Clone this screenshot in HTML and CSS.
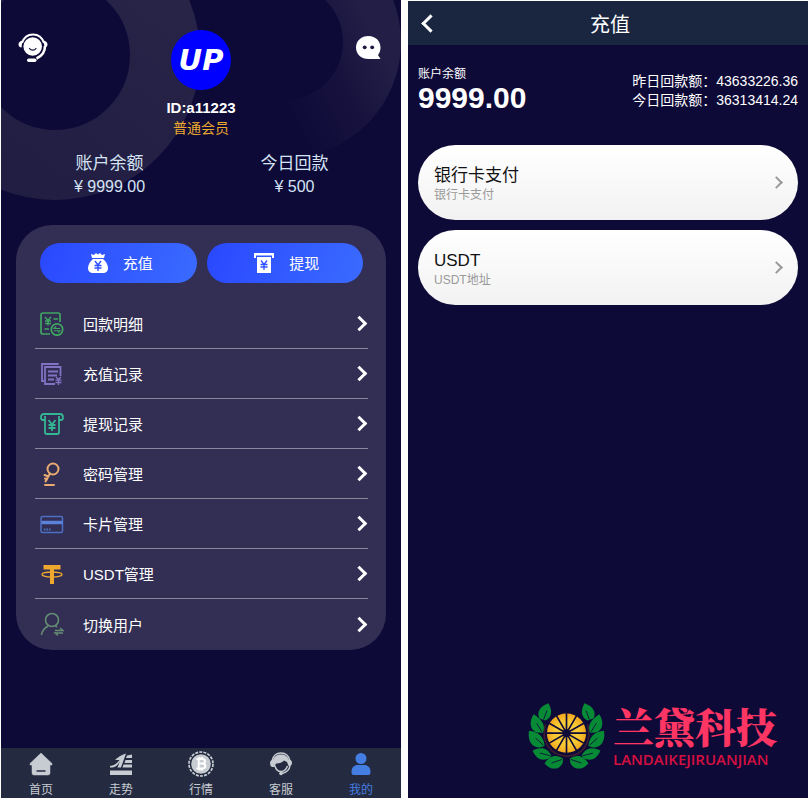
FILE: index.html
```html
<!DOCTYPE html>
<html lang="zh-CN">
<head>
<meta charset="utf-8">
<meta name="viewport" content="width=device-width, initial-scale=1">
<title>我的 · 充值</title>
<link rel="stylesheet" href="styles.css">
</head>
<body>
<main class="screens">
  <section class="screen profile" aria-label="我的">
    <svg class="rings" viewBox="0 0 400 210" width="400" height="210" aria-hidden="true">
      <defs>
        <linearGradient id="ringLeft" x1="1" y1="0" x2="0.2" y2="1"><stop offset="0" stop-color="#292548"/><stop offset="1" stop-color="#211d43"/></linearGradient>
        <linearGradient id="ringRight" gradientUnits="userSpaceOnUse" x1="385" y1="60" x2="285" y2="110"><stop offset="0" stop-color="#231e46"/><stop offset="0.45" stop-color="#17123d"/><stop offset="1" stop-color="#0e0a38"/></linearGradient>
      </defs>
      <circle cx="284" cy="42" r="87" fill="none" stroke="url(#ringRight)" stroke-width="58"/>
      <circle cx="54" cy="55" r="110" fill="none" stroke="url(#ringLeft)" stroke-width="70"/>
    </svg>

    <header class="user">
      <button class="icon-button" type="button" aria-label="客服">
        <svg viewBox="0 0 30 30" width="30" height="30" fill="none" stroke="#fff">
          <path d="M4 10C6 4 10 1.500 15 1.500S24 4 26 10" stroke-width="2"/>
          <path d="M4.500 7.500C2 8 .5 9.500.5 11.500s1.500 3 3 3zM25.500 7.500C28 8 29.500 9.500 29.500 11.500s-1.500 3-3 3z" fill="#fff" stroke="none"/>
          <circle cx="14.700" cy="13.500" r="9.300" fill="#fff" stroke="none"/>
          <path d="M11.500 15.500c1.500 2.200 5 2.200 6.500 0" stroke="#171340" stroke-width="1.300" stroke-linecap="round"/>
          <path d="M27 13c0 5-3 10-8.500 12.500" stroke-width="2.600"/>
          <rect x="9" y="25.500" width="9.500" height="3.500" rx="1.700" fill="#fff" stroke="none"/>
        </svg>
      </button>
      <div class="identity">
        <div class="avatar">UP</div>
        <strong class="user-id">ID:a11223</strong>
        <span class="level">普通会员</span>
      </div>
      <button class="icon-button" type="button" aria-label="消息">
        <svg viewBox="0 0 30 30" width="30" height="30">
          <path d="M14.500 3C21.500 3 26.500 8 26.500 14.500c0 3-1 5.500-2.500 7.500l2.500 4H14.500C7.500 26 2 21.500 2 14.500S7.500 3 14.500 3z" fill="#fff"/>
          <circle cx="10.700" cy="14.300" r="1.900" fill="#1c183f"/><circle cx="18.200" cy="14.300" r="1.900" fill="#1c183f"/>
        </svg>
      </button>
    </header>

    <dl class="totals">
      <div><dt>账户余额</dt><dd>¥ 9999.00</dd></div>
      <div><dt>今日回款</dt><dd>¥ 500</dd></div>
    </dl>

    <div class="card">
      <div class="actions">
        <button class="action" type="button">
          <svg viewBox="0 0 22 22" width="22" height="22">
            <path d="M5 6L4 2l3 1 2-2 2 1.500L13 1l2 2 3-1-1 4z" fill="#fff"/>
            <path d="M6 7h10c3 2.500 5 6 5 9 0 3.500-2 5-5 5H6c-3 0-5-1.500-5-5 0-3 2-6.500 5-9z" fill="#fff"/>
            <path d="M8 9l3 4 3-4M11 13v6M7.500 13.500h7M7.500 16h7" stroke="#2f50ff" stroke-width="1.400" fill="none"/>
          </svg>
          <span>充值</span>
        </button>
        <button class="action" type="button">
          <svg viewBox="0 0 22 22" width="22" height="22">
            <path d="M1 1h20v5h-2V3.500H3V6H1z" fill="#fff"/>
            <path d="M4 5h14v16H4z" fill="#fff"/>
            <path d="M8 8.500l3 4 3-4M11 12.500v5.500M7.500 12.500h7M7.500 15h7" stroke="#2f50ff" stroke-width="1.300" fill="none"/>
          </svg>
          <span>提现</span>
        </button>
      </div>
      <nav class="menu" aria-label="账户菜单">
        <a href="#returns">
          <svg viewBox="0 0 24 24" width="24" height="24" fill="none" stroke="#40a662" stroke-width="1.700">
            <path d="M20 10V3q0-2-2-2H3Q1 1 1 3v17q0 2 2 2h7"/><path d="M5 5l3 3.500L11 5M8 8.500v5M5 9h6M5 11.500h6M13.500 7H18M4.500 17H9" stroke-width="1.400"/>
            <circle cx="17" cy="17.500" r="5.700"/><path d="M20 16.500h-6l2-2M14 18.700h6l-2 2" stroke-width="1.100"/>
          </svg>
          <span>回款明细</span><i class="chevron"></i>
        </a>
        <a href="#recharges">
          <svg viewBox="0 0 24 24" width="24" height="24" fill="none" stroke="#8272c4" stroke-width="1.800">
            <path d="M18 2.500V2H2v17h2"/><path d="M20.500 14V5H5v17h10"/><path d="M8 9.500h10M8 13.500h9M8 17.500h6"/><path d="M16 15l2.500 2.500L21 15M18.500 17.500V23M15.500 18.200h6M15.500 20.500h6" stroke-width="1.300"/>
          </svg>
          <span>充值记录</span><i class="chevron"></i>
        </a>
        <a href="#withdrawals">
          <svg viewBox="0 0 24 24" width="24" height="24" fill="none" stroke="#35b693" stroke-width="1.800">
            <path d="M5 8H3Q1 8 1 5.500 1 2 4 2h16q3 0 3 3.500Q23 8 21 8h-2"/><path d="M5 4v16q0 2 2 2h10q2 0 2-2V4"/><path d="M8.500 8l3.500 4.500L15.500 8M12 12.500V19M8.500 13h7M8.500 16h7"/>
          </svg>
          <span>提现记录</span><i class="chevron"></i>
        </a>
        <a href="#password">
          <svg viewBox="0 0 24 24" width="24" height="24" fill="none" stroke="#e8ab70" stroke-width="2" stroke-linecap="round" stroke-linejoin="round">
            <circle cx="13" cy="7" r="5.500"/><path d="M10 11.500L5.500 19.500M8.500 14.500l-4-1.500M7 17.500l-2-1M5 23h9"/>
          </svg>
          <span>密码管理</span><i class="chevron"></i>
        </a>
        <a href="#cards">
          <svg viewBox="0 0 24 24" width="24" height="24" fill="none" stroke="#4c70c2" stroke-width="1.500">
            <rect x="1" y="4.500" width="21.500" height="16" rx="1.500"/><path d="M1.500 10.500h21" stroke="#5b82da" stroke-width="3.500"/><path d="M4 17.500h1.500M6.500 17.500H8M9 17.500h1.500" stroke-width="2"/>
          </svg>
          <span>卡片管理</span><i class="chevron"></i>
        </a>
        <a href="#usdt">
          <svg viewBox="0 0 24 24" width="24" height="24" fill="none" stroke="#efa82e">
            <path d="M3.500 3h17v4.500H14V22h-4V7.500H3.500z" fill="#efa82e" stroke="none"/><ellipse cx="12" cy="12.500" rx="10" ry="2.500" stroke-width="1.300"/>
          </svg>
          <span>USDT管理</span><i class="chevron"></i>
        </a>
        <a href="#switch">
          <svg viewBox="0 0 24 24" width="24" height="24" fill="none" stroke="#668e73" stroke-width="1.600">
            <circle cx="12" cy="8" r="6.500"/><path d="M1.500 23c.5-4.500 3-7 6.500-9M15.500 14.200l1.500 1"/><path d="M15 18.500h8l-3-2.500M23 21h-8l3 2.500" stroke-width="1.300"/>
          </svg>
          <span>切换用户</span><i class="chevron"></i>
        </a>
      </nav>
    </div>

    <nav class="tabs" aria-label="主导航">
      <a href="#home">
        <svg viewBox="0 0 26 26" width="26" height="26"><path d="M13 2l11 10.500V14h-2v8q0 2-2 2H6q-2 0-2-2v-8H2v-1.500z" fill="#c7ccd2" stroke="#c7ccd2" stroke-width=".5"/><path d="M8.500 20h9" stroke="#242a3f" stroke-width="1.500"/></svg>
        <span>首页</span>
      </a>
      <a href="#trend">
        <svg viewBox="0 0 26 26" width="26" height="26" fill="#c7ccd2"><path d="M2 19.500h22V24H2z"/><path d="M2 16.500V15c4-.5 7-2.500 9.500-6L7 9C10 6 13 4 18 2.500L13 16.500H9.500L12 10c-2 4-4.500 6.500-7.500 6.500zM19 4.500l5-1V7h-6zM17.500 9H24v3h-7.500zM15.500 13.500H24v3h-9.500z"/></svg>
        <span>走势</span>
      </a>
      <a href="#market">
        <svg viewBox="0 0 26 26" width="26" height="26" fill="none"><circle cx="13" cy="13" r="12" stroke="#c7ccd2" stroke-width="1.700" stroke-dasharray="3 1.189"/><circle cx="13" cy="13" r="9.800" fill="#c7ccd2"/><path d="M8.500 8H14c4 0 4 4.500 0 4.500h-3.500M14 12.500c4.500 0 4.500 5 0 5H8.500M10.700 8v9.500M11.500 6v2M14 6v2M11.500 17.500v2M14 17.500v2" stroke="#fff" stroke-width="1.900"/></svg>
        <span>行情</span>
      </a>
      <a href="#service">
        <svg viewBox="0 0 26 26" width="26" height="26" fill="none" stroke="#c7ccd2"><path d="M4 10C5 5 8.500 2 13 2s8 3 9 8" stroke-width="1.300"/><path d="M5 9C6 5.500 9 3.500 13 3.500S20 5.500 21 9h1.500q1.500.5 1.500 3t-2 3h-1.500l-1.500-4-3-1.500c-3 3-6 3-8 3L6.500 16H4Q2 15 2 12t3-3z" fill="#c7ccd2" stroke="none"/><path d="M7 15c1 4 3 5.500 6 5.500s5-1.500 6.500-5.500M22 14.500c-.5 4-3.500 7-8 8" stroke-width="1.500"/><circle cx="13" cy="22.500" r="1.800" fill="#c7ccd2" stroke="none"/></svg>
        <span>客服</span>
      </a>
      <a href="#me" class="current" aria-current="page">
        <svg viewBox="0 0 26 26" width="26" height="26" fill="#457ee3"><circle cx="13" cy="7.500" r="5.500"/><path d="M3.500 21c0-5 3-7 6-7h7c3 0 6 2 6 7q0 3-2 3h-15q-2 0-2-3z"/></svg>
        <span>我的</span>
      </a>
    </nav>
  </section>

  <section class="screen recharge" aria-label="充值">
    <header class="title-bar">
      <button class="back" type="button" aria-label="返回"><i class="chevron back-mark"></i></button>
      <h1>充值</h1>
    </header>
    <div class="summary">
      <div class="balance"><span>账户余额</span><strong>9999.00</strong></div>
      <div class="returns"><span>昨日回款额：43633226.36</span><span>今日回款额：36313414.24</span></div>
    </div>
    <div class="methods">
      <button class="method" type="button">
        <span class="method-text"><span class="method-name">银行卡支付</span><span class="method-note">银行卡支付</span></span>
        <i class="chevron small"></i>
      </button>
      <button class="method" type="button">
        <span class="method-text"><span class="method-name">USDT</span><span class="method-note">USDT地址</span></span>
        <i class="chevron small"></i>
      </button>
    </div>
    <footer class="brand">
      <svg viewBox="50 35 232 203" width="77" height="68" aria-hidden="true">
        <defs>
          <radialGradient id="fruit"><stop offset="0" stop-color="#f5c33a"/><stop offset="0.6" stop-color="#f8cb35"/><stop offset="1" stop-color="#f3a71d"/></radialGradient>
          <g id="laurel">
            <g fill="#078a35">
              <path d="M112 38C88 46 74 64 85 84L103 90C124 78 123 60 112 38z"/>
              <path d="M67 71C52 96 56 119 78 126L95 127C104 105 92 86 67 71z"/>
              <path d="M53 121C48 150 62 172 86 171L100 167C98 141 84 124 53 121z"/>
              <path d="M64 180C74 206 94 214 115 203L120 195C108 172 90 168 64 180z"/>
              <path d="M100 219C118 240 142 240 154 219L156 205C135 190 114 196 100 219z"/>
            </g>
            <path d="M97 87L107 60M92 124L76 98M96 164L73 143M117 196L86 188M153 207L121 218" stroke="#0e0a38" stroke-width="2.500" fill="none"/>
          </g>
        </defs>
        <path d="M103 102C88 150 115 195 166 197S244 150 229 102" fill="none" stroke="#3d1c31" stroke-width="5"/>
        <use href="#laurel"/><use href="#laurel" transform="translate(332 0) scale(-1 1)"/>
        <circle cx="166" cy="128" r="59" fill="url(#fruit)"/>
        <path d="M106 128h120M166 68v120M114 98l104 60M114 158l104-60M136 76l60 104M196 76l-60 104" stroke="#0e0a38" stroke-width="5"/>
        <circle cx="166" cy="128" r="12" fill="#0e0a38"/>
      </svg>
      <div class="brand-text"><strong>兰黛科技</strong><span>LANDAIKEJIRUANJIAN</span></div>
    </footer>
  </section>
</main>
</body>
</html>
```
FILE: styles.css
```css
* {
  box-sizing: border-box;
}

body {
  margin: 0;
  background: #fff;
  color: #fff;
  font-family: "Liberation Sans", "Noto Sans CJK SC", sans-serif;
}

button {
  margin: 0;
  padding: 0;
  border: 0;
  background: none;
  color: inherit;
  font: inherit;
}

a {
  color: inherit;
  text-decoration: none;
}

svg {
  display: block;
  flex: none;
}

.screens {
  display: grid;
  grid-template-columns: 1fr 1fr;
  gap: 7px;
  min-height: 100vh;
  padding: 0 0 2px 1px;
}

.screen {
  display: flex;
  flex-direction: column;
  position: relative;
  min-width: 0;
  background: #0e0a38;
}

.rings {
  position: absolute;
  top: 0;
  left: 0;
}

.user {
  position: relative;
  display: flex;
  justify-content: space-between;
  align-items: flex-start;
  padding: 30px 17px 0;
}

.icon-button {
  padding-top: 3px;
}

.identity {
  display: flex;
  flex-direction: column;
  align-items: center;
}

.avatar {
  display: grid;
  place-items: center;
  width: 60px;
  height: 60px;
  border-radius: 50%;
  background: #0000fe;
  font: italic bold 29px "DejaVu Sans", sans-serif;
}

.user-id {
  margin-top: 8px;
  font-size: 15px;
  line-height: 20px;
}

.level {
  color: #eba92f;
  font-size: 14px;
  line-height: 20px;
}

.totals {
  position: relative;
  display: grid;
  grid-template-columns: 1fr 1fr;
  margin: 14px 14px 0 16px;
  color: #d5e3f5;
  text-align: center;
}

.totals dt {
  font-size: 17px;
  line-height: 24px;
}

.totals dd {
  margin: 0;
  font-size: 16px;
  line-height: 22px;
}

.card {
  position: relative;
  margin: 27px 15px 0;
  padding: 18px 18px 1px 19px;
  border-radius: 36px;
  background: #322e54;
}

.actions {
  display: grid;
  grid-template-columns: 1fr 1fr;
  gap: 10px;
  margin: 0 5px 16px;
}

.action {
  display: flex;
  align-items: center;
  justify-content: center;
  gap: 14px;
  height: 40px;
  padding: 0 0 1px 3px;
  border-radius: 20px;
  background: linear-gradient(110deg, #2a48ff, #3a6bff);
  font-size: 15px;
}

.menu a {
  display: flex;
  align-items: center;
  height: 50px;
  padding-left: 5px;
  border-bottom: 1px solid #8a879c;
  font-size: 15px;
}

.menu a:last-child {
  border-bottom: 0;
}

.menu span {
  flex: 1;
  padding-left: 19px;
}

.chevron {
  width: 11px;
  height: 11px;
  margin-right: 3px;
  border: solid #fff;
  border-width: 3px 3px 0 0;
  transform: rotate(45deg);
}

.tabs {
  display: grid;
  grid-template-columns: repeat(5, 1fr);
  height: 50px;
  margin-top: auto;
  background: #242a3f;
  color: #c7ccd2;
  font-size: 12px;
}

.tabs a {
  display: flex;
  flex-direction: column;
  align-items: center;
  gap: 5px;
  padding-top: 3px;
  line-height: 16px;
}

.tabs .current {
  color: #457ee3;
}

.recharge {
  margin-top: 1px;
}

.title-bar {
  display: grid;
  grid-template-columns: 44px 1fr 40px;
  align-items: center;
  height: 44px;
  background: #1a2640;
}

.title-bar h1 {
  margin: 0;
  font-size: 20px;
  font-weight: normal;
  text-align: center;
}

.back {
  display: grid;
  place-items: center;
  height: 44px;
}

.back-mark {
  width: 13px;
  height: 13px;
  margin: 0;
  border-width: 0 0 3px 3px;
}

.summary {
  display: flex;
  align-items: center;
  justify-content: space-between;
  padding: 21px 10px 31px;
}

.balance,
.returns {
  display: flex;
  flex-direction: column;
}

.balance span {
  font-size: 12px;
  line-height: 16px;
}

.balance strong {
  font-size: 30px;
  line-height: 32px;
}

.returns {
  padding-top: 2px;
  font-size: 14px;
  line-height: 19px;
}

.methods {
  display: grid;
  gap: 10px;
  padding: 0 10px;
}

.method {
  display: flex;
  align-items: center;
  justify-content: space-between;
  height: 75px;
  padding: 0 16px;
  border-radius: 38px;
  background: linear-gradient(#fff, #f2f2f2);
  color: #111;
  text-align: left;
}

.method-text {
  display: flex;
  flex-direction: column;
  padding-top: 4px;
}

.method-name {
  font-size: 17px;
  line-height: 22px;
}

.method-note {
  color: #999;
  font-size: 12px;
  line-height: 17px;
}

.small {
  width: 9px;
  height: 9px;
  margin-right: 1px;
  border-width: 2px 2px 0 0;
  border-color: #999;
}

.brand {
  display: flex;
  align-items: center;
  justify-content: flex-end;
  gap: 8px;
  margin-top: auto;
  padding: 0 31px 28px 0;
}

.brand-text {
  display: flex;
  flex-direction: column;
}

.brand strong {
  color: #ff3563;
  font: 900 41px/46px "Noto Serif CJK SC", "Noto Sans CJK SC", serif;
}

.brand span {
  color: #d5103f;
  font: 600 15px/20px "Open Sans", sans-serif;
}
```
